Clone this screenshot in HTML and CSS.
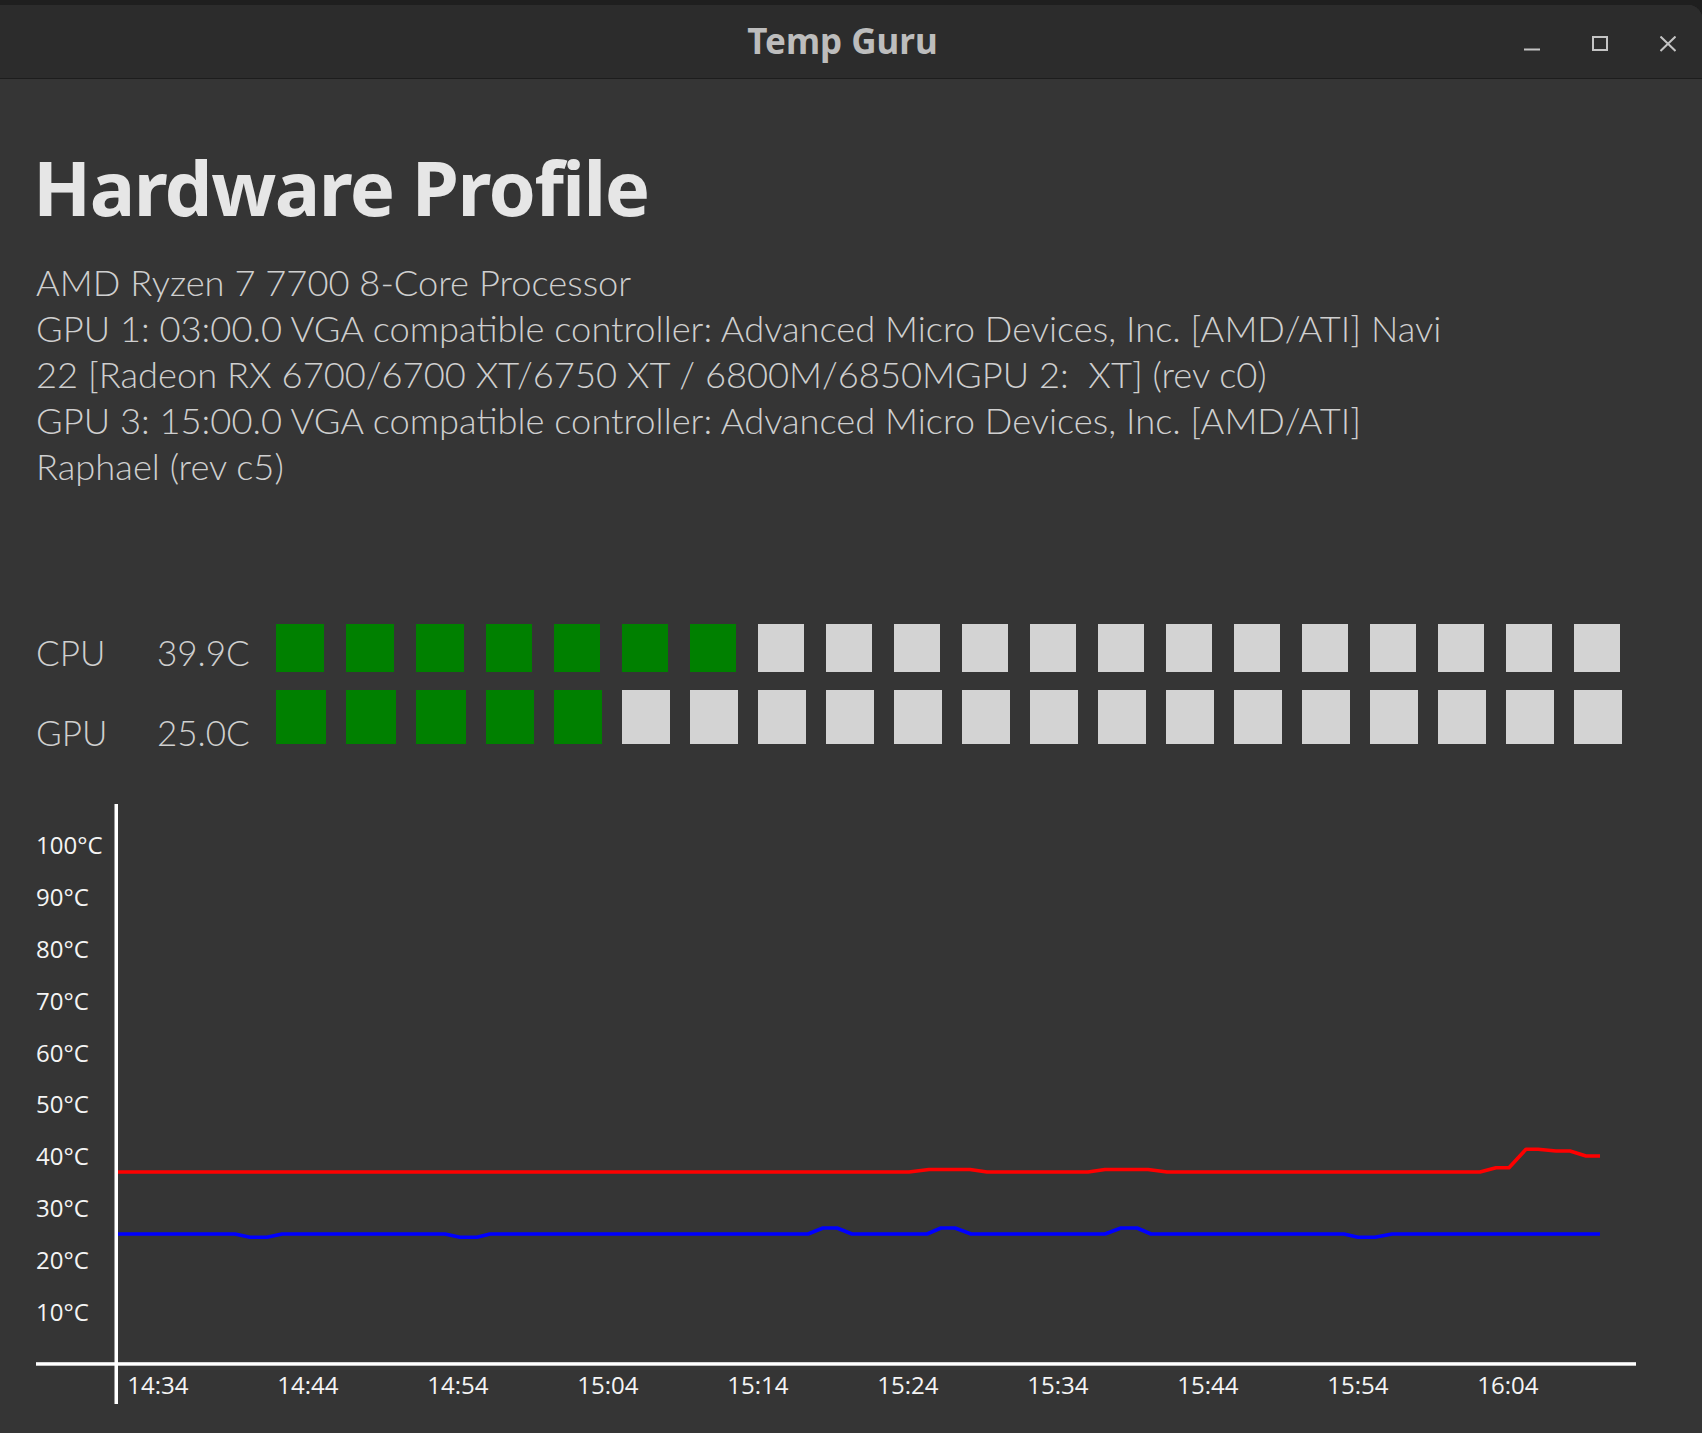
FILE: index.html
```html
<!DOCTYPE html>
<html lang="en">
<head>
<meta charset="utf-8">
<title>Temp Guru</title>
<link rel="stylesheet" href="styles.css">
</head>
<body>
<div class="window">
  <header class="titlebar">
    <div class="tb-spacer"></div>
    <div class="tb-title">Temp Guru</div>
    <div class="tb-controls">
      <span class="tb-btn"><svg width="16" height="16" viewBox="0 0 16 16"><path d="M0 13.5H16" class="ico"/></svg></span>
      <span class="tb-btn"><svg width="16" height="16" viewBox="0 0 16 16"><rect x="1" y="1" width="14" height="13" class="ico"/></svg></span>
      <span class="tb-btn"><svg width="16" height="16" viewBox="0 0 16 16"><path d="M0.5 0.5L15.5 15M15.5 0.5L0.5 15" class="ico"/></svg></span>
    </div>
  </header>

  <main class="content">
    <h1 class="heading">Hardware Profile</h1>

    <div class="info">
      <div class="info-line">AMD Ryzen 7 7700 8-Core Processor</div>
      <div class="info-line">GPU 1: 03:00.0 VGA compatible controller: Advanced Micro Devices, Inc. [AMD/ATI] Navi</div>
      <div class="info-line">22 [Radeon RX 6700/6700 XT/6750 XT / 6800M/6850MGPU 2:&nbsp; XT] (rev c0)</div>
      <div class="info-line">GPU 3: 15:00.0 VGA compatible controller: Advanced Micro Devices, Inc. [AMD/ATI]</div>
      <div class="info-line">Raphael (rev c5)</div>
    </div>

    <div class="meters">
      <div class="meter meter-cpu">
        <span class="m-label">CPU</span>
        <span class="m-value">39.9C</span>
        <div class="cells">
          <i class="cell on"></i><i class="cell on"></i><i class="cell on"></i><i class="cell on"></i><i class="cell on"></i><i class="cell on"></i><i class="cell on"></i><i class="cell"></i><i class="cell"></i><i class="cell"></i><i class="cell"></i><i class="cell"></i><i class="cell"></i><i class="cell"></i><i class="cell"></i><i class="cell"></i><i class="cell"></i><i class="cell"></i><i class="cell"></i><i class="cell"></i>
        </div>
      </div>
      <div class="meter meter-gpu">
        <span class="m-label">GPU</span>
        <span class="m-value">25.0C</span>
        <div class="cells">
          <i class="cell on"></i><i class="cell on"></i><i class="cell on"></i><i class="cell on"></i><i class="cell on"></i><i class="cell"></i><i class="cell"></i><i class="cell"></i><i class="cell"></i><i class="cell"></i><i class="cell"></i><i class="cell"></i><i class="cell"></i><i class="cell"></i><i class="cell"></i><i class="cell"></i><i class="cell"></i><i class="cell"></i><i class="cell"></i><i class="cell"></i>
        </div>
      </div>
    </div>

    <svg class="chart" width="1702" height="643" viewBox="0 790 1702 643">
      <g class="ylabels">
        <text x="36" y="854.3">100°C</text>
        <text x="36" y="906.1">90°C</text>
        <text x="36" y="957.9">80°C</text>
        <text x="36" y="1009.8">70°C</text>
        <text x="36" y="1061.6">60°C</text>
        <text x="36" y="1113.4">50°C</text>
        <text x="36" y="1165.2">40°C</text>
        <text x="36" y="1217.0">30°C</text>
        <text x="36" y="1268.9">20°C</text>
        <text x="36" y="1320.7">10°C</text>
      </g>
      <g class="xlabels">
        <text x="127.3" y="1394">14:34</text>
        <text x="277.3" y="1394">14:44</text>
        <text x="427.3" y="1394">14:54</text>
        <text x="577.3" y="1394">15:04</text>
        <text x="727.3" y="1394">15:14</text>
        <text x="877.3" y="1394">15:24</text>
        <text x="1027.3" y="1394">15:34</text>
        <text x="1177.3" y="1394">15:44</text>
        <text x="1327.3" y="1394">15:54</text>
        <text x="1477.3" y="1394">16:04</text>
      </g>
      <polyline class="series-cpu" points="117,1172 909,1172 929,1169.5 970,1169.5 987,1172 1088,1172 1105,1169.5 1148,1169.5 1167,1172 1480,1172 1496,1167.7 1509,1167.7 1526,1149.3 1538,1149.3 1556,1151 1570,1151 1586,1156 1600,1156"/>
      <polyline class="series-gpu" points="117,1234 235,1234 250,1237.3 267,1237.3 282,1234 445,1234 460,1237.3 477,1237.3 490,1234 808,1234 823,1228 837,1228 852,1234 927,1234 941,1228 955,1228 971,1234 1105,1234 1121,1228 1137,1228 1151,1234 1344,1234 1358,1237.3 1375,1237.3 1392,1234 1600,1234"/>
      <rect class="axis" x="114.5" y="804" width="3.5" height="600"/>
      <rect class="axis" x="36" y="1362.2" width="1600" height="3.5"/>
    </svg>
  </main>
</div>
</body>
</html>
```

FILE: styles.css
```css
* { box-sizing: border-box; }

html, body {
  margin: 0;
  padding: 0;
  background: #1f1f1f;
}

body {
  width: 1702px;
  height: 1433px;
  overflow: hidden;
  font-family: "Noto Sans", "Open Sans", sans-serif;
}

.window {
  margin-top: 5px;
  height: 1428px;
  background: #353535;
  border-top-right-radius: 14px;
  overflow: hidden;
}

.titlebar {
  height: 74px;
  background: #2c2c2c;
  border-bottom: 1px solid #1d1d1d;
  display: grid;
  grid-template-columns: 1fr auto 1fr;
  align-items: center;
}

.tb-title {
  font-family: "Noto Sans", sans-serif;
  font-weight: 700;
  font-size: 35px;
  color: #bdbdbd;
  line-height: 1;
  padding-bottom: 2px;
  margin-right: 17px;
}

.tb-controls {
  display: flex;
  justify-content: flex-end;
  align-self: stretch;
  align-items: center;
}

.tb-btn {
  width: 68px;
  display: flex;
  justify-content: center;
  padding-top: 4px;
}

.tb-btn svg { display: block; }

.ico {
  fill: none;
  stroke: #c4c4c4;
  stroke-width: 2;
}

.content {
  display: block;
}

.heading {
  margin: 63px 0 0 33px;
  font-family: "Noto Sans", sans-serif;
  font-weight: 700;
  font-size: 76px;
  line-height: 90px;
  letter-spacing: -1.5px;
  color: #e6e6e6;
}

.info {
  margin: 27px 0 0 36px;
  font-family: "Lato", "Noto Sans", sans-serif;
  font-weight: 300;
  font-size: 36.3px;
  line-height: 46px;
  color: #cfcfcf;
}

.info-line { white-space: nowrap; }

.meters {
  margin: 135px 0 0 36px;
  display: flex;
  flex-direction: column;
  gap: 18px;
}

.meter {
  display: flex;
  align-items: flex-end;
}

.meter-cpu { height: 48px; }
.meter-gpu { height: 54px; }

.m-label, .m-value {
  font-family: "Lato", "Noto Sans", sans-serif;
  font-weight: 300;
  font-size: 35px;
  line-height: 36px;
  color: #cfcfcf;
  white-space: nowrap;
}

.m-label { width: 121px; }
.m-value { width: 119px; }

.meter-cpu .m-label, .meter-cpu .m-value { margin-bottom: 2px; }
.meter-gpu .m-label, .meter-gpu .m-value { margin-bottom: -6px; }

.cells {
  display: flex;
  align-self: stretch;
}

.meter-cpu .cells { gap: 22px; }
.meter-gpu .cells { gap: 20px; }

.cell {
  flex: none;
  background: #d3d3d3;
}

.meter-cpu .cell { width: 46px; }
.meter-gpu .cell { width: 48px; }
.meter-cpu .cell:nth-child(-n+3) { width: 48px; }
.meter-gpu .cell:nth-child(-n+3) { width: 50px; }

.cell.on { background: #008000; }

.chart {
  display: block;
  margin-top: 46px;
}

.chart text {
  font-family: "Open Sans", "Noto Sans", sans-serif;
  font-size: 24px;
  fill: #f4f4f4;
}

.axis { fill: #ffffff; }

.series-cpu, .series-gpu {
  fill: none;
  stroke-width: 3.6;
  stroke-linejoin: round;
}

.series-cpu { stroke: #ff0000; }
.series-gpu { stroke: #0000ff; }
```
